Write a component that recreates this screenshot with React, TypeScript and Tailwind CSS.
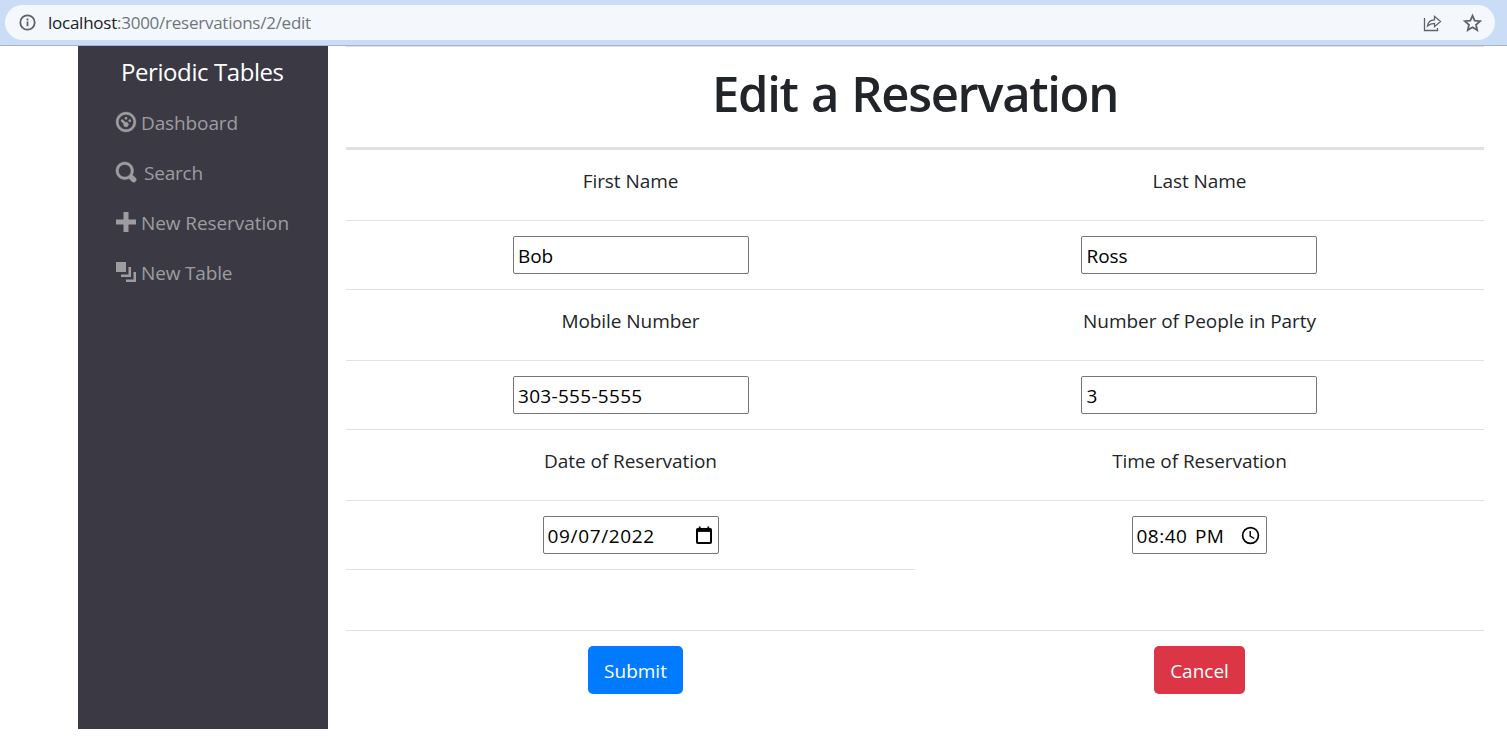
import React from "react";

type NavItem = { label: string; icon: string; iconStroke: number; textClass: string };

const NAV: NavItem[] = [
  {
    label: "Dashboard",
    textClass: "ml-[5px] tracking-[-0.12px]",
    iconStroke: 0.12,
    icon: "M4 0c-2.2 0-4 1.8-4 4s1.8 4 4 4 4-1.8 4-4-1.8-4-4-4zm0 1c1.66 0 3 1.34 3 3s-1.34 3-3 3-3-1.34-3-3 1.34-3 3-3zm0 1c-.28 0-.5.22-.5.5s.22.5.5.5.5-.22.5-.5-.22-.5-.5-.5zm-1.66 1a.5.5 0 0 0-.19.84l.91.91c-.02.08-.06.16-.06.25 0 .55.45 1 1 1s1-.45 1-1-.45-1-1-1c-.09 0-.17.04-.25.06l-.91-.91a.5.5 0 0 0-.44-.16.5.5 0 0 0-.06 0zm3.16 0c-.28 0-.5.22-.5.5s.22.5.5.5.5-.22.5-.5-.22-.5-.5-.5z",
  },
  {
    label: "Search",
    textClass: "ml-[8px] tracking-[-0.2px]",
    iconStroke: 0.2,
    icon: "M3.5 0c-1.93 0-3.5 1.57-3.5 3.5s1.57 3.5 3.5 3.5c.59 0 1.17-.14 1.66-.41a1 1 0 0 0 .13.13l1 1a1.02 1.02 0 1 0 1.44-1.44l-1-1a1 1 0 0 0-.16-.13c.27-.49.44-1.06.44-1.66 0-1.93-1.55-3.5-3.5-3.5zm0 1c1.39 0 2.5 1.11 2.5 2.5 0 .66-.24 1.27-.66 1.72-.01.01-.02.02-.03.03a1 1 0 0 0-.13.13c-.44.4-1.04.63-1.69.63-1.39 0-2.5-1.11-2.5-2.5s1.11-2.5 2.5-2.5z",
  },
  {
    label: "New Reservation",
    textClass: "ml-[5px] tracking-[-0.08px]",
    iconStroke: 0,
    icon: "M3 0v3h-3v2h3v3h2v-3h3v-2h-3v-3h-2z",
  },
  {
    label: "New Table",
    textClass: "ml-[5px] tracking-[-0.16px]",
    iconStroke: 0,
    icon: "M0 0v4h4v-4h-4zm5 2v3h-3v1h4v-4h-1zm2 2v3h-3v1h4v-4h-1z",
  },
];

function AddressBar() {
  return (
    <header className="h-[46px] border-b border-[#a3b4d0] bg-[#cbdcf7] pt-[5px] pr-3 pl-[5px]">
      <div className="flex h-[35px] items-center rounded-full bg-[#f4f8fd] pr-[13px] pl-[14px]">
        <svg width="17" height="17" viewBox="0 0 17 17" fill="none" stroke="#5f6368">
          <circle cx="8.5" cy="8.5" r="7.2" strokeWidth="1.8" />
          <path d="M8.5 7.6v4.6M8.5 4.6v1.8" strokeWidth="1.8" />
        </svg>
        <div className="ml-3 flex-1 text-[17px] leading-6 text-[#70757a]">
          <span className="tracking-[-0.25px] text-[#202124]">localhost</span>
          <span className="tracking-[-0.25px]">:3000/reservations/2/edit</span>
        </div>
        <svg className="mr-[20px]" width="20" height="20" viewBox="0 0 20 20" fill="none" stroke="#5f6368" strokeWidth="1.3">
          <path d="M2.500 5v12.500h13v-2.500" />
          <path d="M5.500 13c.4-4 2.800-6 7-6.200V3.300l6 5.200-6 5.200v-3.400c-3.200 0-5 .7-7 2.700z" />
        </svg>
        <svg width="20" height="20" viewBox="0 0 20 20" fill="none" stroke="#5f6368" strokeWidth="1.8">
          <path d="M10.500 2.700l2.150 5 5.450.5-4.100 3.600 1.200 5.300-4.700-2.800-4.700 2.800 1.200-5.300-4.100-3.600 5.450-.5z" />
        </svg>
      </div>
    </header>
  );
}

function Sidebar() {
  return (
    <nav className="h-[683px] w-[250px] shrink-0 bg-[#3b3a44]">
      <div className="pt-[8px] pl-[43px] text-[24px] leading-[36px] tracking-[-0.42px] text-white">
        Periodic Tables
      </div>
      <ul className="mt-[8px] pl-[38px] text-[19px] text-[#9d9ca1]">
        {NAV.map((item) => (
          <li key={item.label} className="flex h-[50px] items-center whitespace-nowrap">
            <svg
              className="-mt-[2px] shrink-0 overflow-visible"
              width="20"
              height="20"
              viewBox="0 0 8 8"
              fill="currentColor"
              stroke="currentColor"
              strokeWidth={item.iconStroke}
            >
              <path d={item.icon} />
            </svg>
            <span className={item.textClass}>{item.label}</span>
          </li>
        ))}
      </ul>
    </nav>
  );
}

function LabelRow({ left, right }: { left: string; right: string }) {
  return (
    <div className="grid h-[70px] grid-cols-2 pt-[16px] text-center leading-[30px] tracking-[-0.06px]">
      <div>{left}</div>
      <div>{right}</div>
    </div>
  );
}

function TextField({ value, numeric = false }: { value: string; numeric?: boolean }) {
  return (
    <input
      readOnly
      value={value}
      className={`h-[38px] w-[236px] rounded-[2px] border border-[#767676] bg-white pr-1 pl-[4.500px] pt-[2px] text-black outline-none ${
        numeric ? "tracking-[0.3px]" : "tracking-[-0.06px]"
      }`}
    />
  );
}

function DateField() {
  return (
    <div className="flex h-[38px] w-[176px] items-center justify-between rounded-[2px] border border-[#767676] bg-white pr-[5px] pl-1 text-black">
      <span className="pt-[2px] tracking-[0.65px]">09/07/2022</span>
      <svg width="18" height="20" viewBox="0 0 18 20" fill="none" stroke="#000" strokeWidth="2">
        <rect x="2" y="4" width="14" height="14" rx="0.8" />
        <path d="M2 5.300h14" strokeWidth="3.200" />
        <path d="M4.700 1.500v3M13.300 1.500v3" strokeWidth="1.800" />
      </svg>
    </div>
  );
}

function TimeField() {
  return (
    <div className="flex h-[38px] w-[135px] items-center justify-between rounded-[2px] border border-[#767676] bg-white pr-[6px] pl-1 text-black">
      <span className="pt-[2px] tracking-[0.5px] whitespace-nowrap [word-spacing:2px]">08:40 PM</span>
      <svg className="shrink-0" width="19" height="19" viewBox="0 0 19 19" fill="none" stroke="#000">
        <circle cx="9.500" cy="9.500" r="7.900" strokeWidth="1.700" />
        <path d="M9.200 5v5l4 2.500" strokeWidth="1.400" />
      </svg>
    </div>
  );
}

function FieldRow({ left, right }: { left: React.ReactNode; right: React.ReactNode }) {
  return (
    <div className="grid h-[69px] grid-cols-2 border-t border-[#dee2e6] pt-[15px]">
      <div className="flex justify-center">{left}</div>
      <div className="flex justify-center pr-px">{right}</div>
    </div>
  );
}

export default function App() {
  return (
    <div className="h-[753px] overflow-hidden bg-white font-['Open_Sans','Noto_Sans',sans-serif]">
      <AddressBar />
      <div className="flex pr-[23px] pl-[78px]">
        <Sidebar />
        <main className="ml-[18px] w-[1138px] text-[19px] text-[#212529]">
          <div className="h-[104px] border-t border-b-[3px] border-[#dee2e6] pt-[16px]">
            <h1 className="text-center text-[49px] leading-[60px] font-semibold tracking-[-1.35px] [word-spacing:2px]">
              Edit a Reservation
            </h1>
          </div>
          <LabelRow left="First Name" right="Last Name" />
          <FieldRow left={<TextField value="Bob" />} right={<TextField value="Ross" />} />
          <div className="border-t border-[#dee2e6]">
            <LabelRow left="Mobile Number" right="Number of People in Party" />
          </div>
          <FieldRow left={<TextField value="303-555-5555" numeric />} right={<TextField value="3" numeric />} />
          <div className="border-t border-[#dee2e6]">
            <LabelRow left="Date of Reservation" right="Time of Reservation" />
          </div>
          <FieldRow left={<DateField />} right={<TimeField />} />
          <div className="h-[61px] w-1/2 border-t border-[#dee2e6]" />
          <div className="grid grid-cols-2 justify-items-center border-t border-[#dee2e6] pt-[15px] text-white">
            <button className="ml-[10px] h-12 w-[95px] rounded-[5px] bg-[#007bff] pt-[2px]">Submit</button>
            <button className="h-12 w-[91px] rounded-[5px] bg-[#dc3545] pt-[2px]">Cancel</button>
          </div>
        </main>
      </div>
    </div>
  );
}
